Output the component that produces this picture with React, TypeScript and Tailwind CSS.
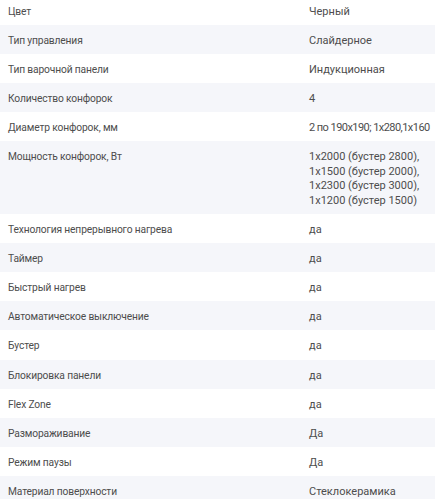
const SPECS: [string, string[]][] = [
  ['Цвет', ['Черный']],
  ['Тип управления', ['Слайдерное']],
  ['Тип варочной панели', ['Индукционная']],
  ['Количество конфорок', ['4']],
  ['Диаметр конфорок, мм', ['2 по 190x190; 1x280,1x160']],
  [
    'Мощность конфорок, Вт',
    [
      '1x2000 (бустер 2800),',
      '1x1500 (бустер 2000),',
      '1x2300 (бустер 3000),',
      '1x1200 (бустер 1500)',
    ],
  ],
  ['Технология непрерывного нагрева', ['да']],
  ['Таймер', ['да']],
  ['Быстрый нагрев', ['да']],
  ['Автоматическое выключение', ['да']],
  ['Бустер', ['да']],
  ['Блокировка панели', ['да']],
  ['Flex Zone', ['да']],
  ['Размораживание', ['Да']],
  ['Режим паузы', ['Да']],
  ['Материал поверхности', ['Стеклокерамика']],
]

export default function App() {
  return (
    <div className="w-[435px] h-[499px] overflow-hidden bg-white">
      <div className="-mt-[4.25px]">
        {SPECS.map(([label, value], i) => (
          <div
            key={label}
            className={`grid grid-cols-[309px_1fr] pt-[9px] pb-[5.3px] leading-[14.75px] text-[#4d4d4d] ${
              i % 2 === 1 ? 'bg-[#f5f6fa]' : 'bg-white'
            }`}
          >
            <div className="pl-2 text-[10.25px] tracking-[-0.15px] font-['Roboto',sans-serif]">{label}</div>
            {/* digits in the diameter row run tighter than elsewhere */}
            <div
              className={`text-[11px] font-['Roboto',sans-serif] whitespace-nowrap ${
                value[0].startsWith('2 по') ? 'tracking-[-0.55px]' : ''
              }`}
            >
              {value.map((line) => (
                <div key={line}>{line}</div>
              ))}
            </div>
          </div>
        ))}
      </div>
    </div>
  )
}
